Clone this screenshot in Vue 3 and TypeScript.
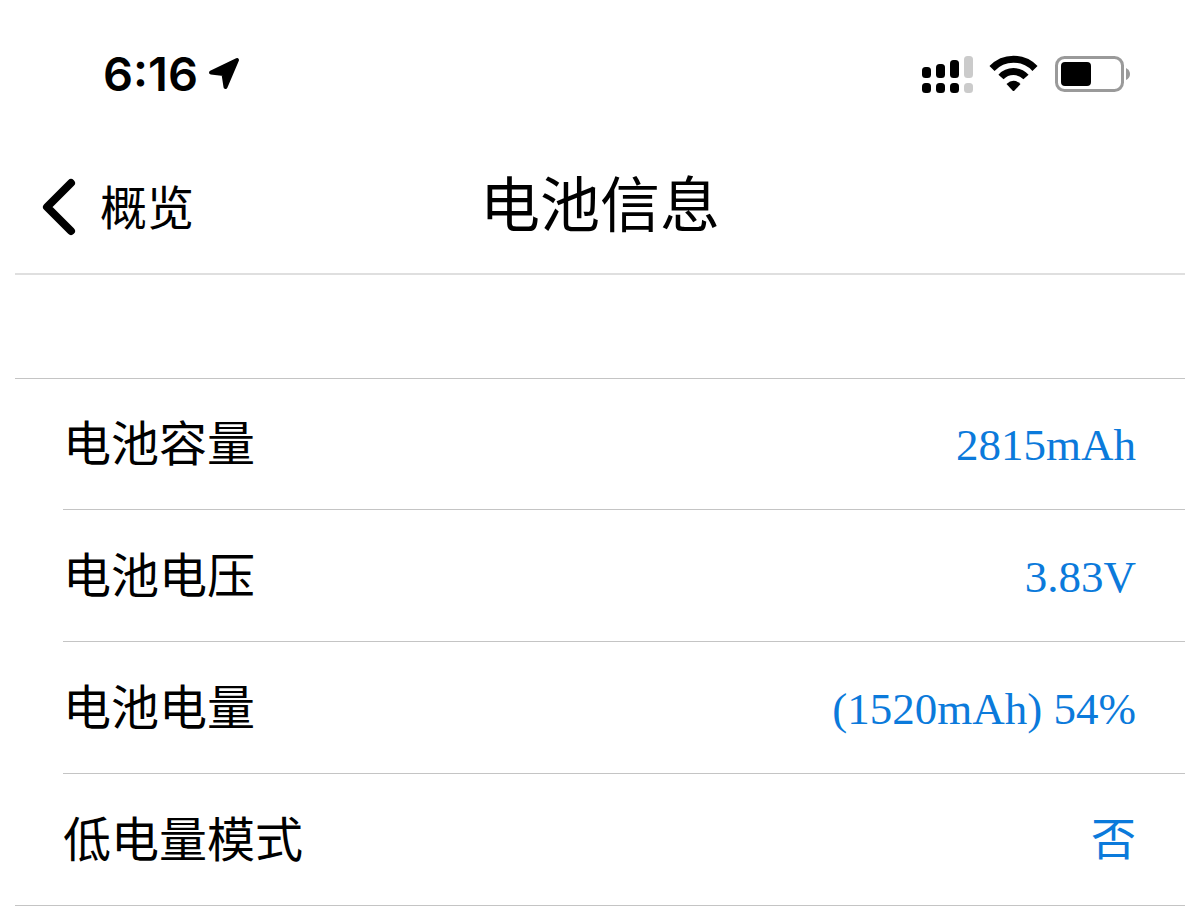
<script setup lang="ts">
interface Row {
  label: string
  value: string
}

const rows: Row[] = [
  { label: '电池容量', value: '2815mAh' },
  { label: '电池电压', value: '3.83V' },
  { label: '电池电量', value: '(1520mAh) 54%' },
  { label: '低电量模式', value: '否' },
]
</script>

<template>
  <main class="screen">
    <div class="status">
      <div class="clock">
        <span>6:16</span>
        <svg width="32" height="34" viewBox="0 0 32 34" aria-hidden="true">
          <path d="M3 15.500L29 3L17.500 30L15.500 17Z" stroke="#000" stroke-width="4" stroke-linejoin="round" />
        </svg>
      </div>
      <div class="indicators">
        <svg width="51" height="38" viewBox="0 0 51 38" aria-hidden="true">
          <g>
            <rect x="0" y="12" width="9" height="11" rx="3.500" />
            <rect x="14" y="9" width="9" height="14" rx="3.500" />
            <rect x="28" y="5" width="9" height="18" rx="3.500" />
            <rect x="0" y="28" width="9" height="10" rx="3.500" />
            <rect x="14" y="28" width="9" height="10" rx="3.500" />
            <rect x="28" y="28" width="9" height="10" rx="3.500" />
          </g>
          <g fill="#cbcbcb">
            <rect x="42" y="1" width="9" height="22" rx="3.500" />
            <rect x="42" y="28" width="9" height="10" rx="3.500" />
          </g>
        </svg>
        <svg width="50" height="38" viewBox="0 0 50 38" aria-hidden="true">
          <g fill="none" stroke="#000" stroke-width="7">
            <path d="M3 13.500A29.500 29.500 0 0 1 46 13.500" />
            <path d="M12 22A17 17 0 0 1 37 22" />
          </g>
          <path d="M17.500 29Q24.500 22.500 31.500 29L25.500 35.500Q24.500 36.500 23.500 35.500Z" />
        </svg>
        <svg width="76" height="36" viewBox="0 0 76 36" aria-hidden="true">
          <rect x="1.500" y="1.500" width="66" height="33" rx="8" fill="none" stroke="#9a9a9a" stroke-width="3" />
          <rect x="6" y="6" width="30" height="24" rx="4" />
          <path d="M71 12Q75 14 75 18T71 24Z" fill="#9a9a9a" />
        </svg>
      </div>
    </div>
    <header class="nav">
      <button class="back" type="button">
        <svg width="36" height="58" viewBox="0 0 36 58" aria-hidden="true">
          <path d="M31 5L7 29L31 53" fill="none" stroke="#000" stroke-width="8" stroke-linecap="round" stroke-linejoin="round" />
        </svg>
        <span>概览</span>
      </button>
      <h1>电池信息</h1>
    </header>
    <dl class="list">
      <div v-for="row in rows" :key="row.label" class="row">
        <dt>{{ row.label }}</dt>
        <dd>{{ row.value }}</dd>
      </div>
    </dl>
  </main>
</template>

<style>
body {
  margin: 0;
  background: #fff;
}
</style>

<style scoped>
.screen {
  padding: 0 15px;
  color: #000;
  font-family: "Liberation Sans", "Noto Sans CJK SC", sans-serif;
}
.status {
  display: flex;
  align-items: center;
  justify-content: space-between;
  height: 148px;
  padding: 0 54px 0 88px;
}
.clock,
.indicators {
  display: flex;
  align-items: center;
}
.clock {
  gap: 10px;
  font: 600 47px/56px Inter, sans-serif;
}
.indicators {
  gap: 16px;
}
.nav {
  box-sizing: border-box;
  display: grid;
  grid-template-columns: 1fr auto 1fr;
  align-items: center;
  height: 127px;
  padding-bottom: 8px;
  border-bottom: 2px solid #dfdfdf;
}
.back {
  display: flex;
  align-items: center;
  justify-self: start;
  gap: 24px;
  padding: 0 0 0 25px;
  border: 0;
  background: none;
  color: inherit;
  font-family: inherit;
  font-size: 47px;
  line-height: 54px;
}
.back span {
  padding-top: 4px;
}
h1 {
  margin: 0;
  font-size: 60px;
  font-weight: 400;
  line-height: 80px;
}
.list {
  margin: 103px 0 0;
  border-top: 1px solid #c4c4c4;
  border-bottom: 1px solid #c4c4c4;
}
.row {
  box-sizing: border-box;
  display: flex;
  align-items: center;
  justify-content: space-between;
  height: 132px;
  margin-left: 48px;
  padding: 2px 49px 0 0;
}
.row:first-child {
  height: 130px;
}
.row + .row {
  border-top: 1px solid #c4c4c4;
}
dt {
  font-size: 48px;
  line-height: 60px;
}
dd {
  margin: 0;
  color: #0b7adb;
  font-family: "Liberation Serif", "Noto Sans CJK SC", serif;
  font-size: 45px;
  line-height: 60px;
}
</style>
